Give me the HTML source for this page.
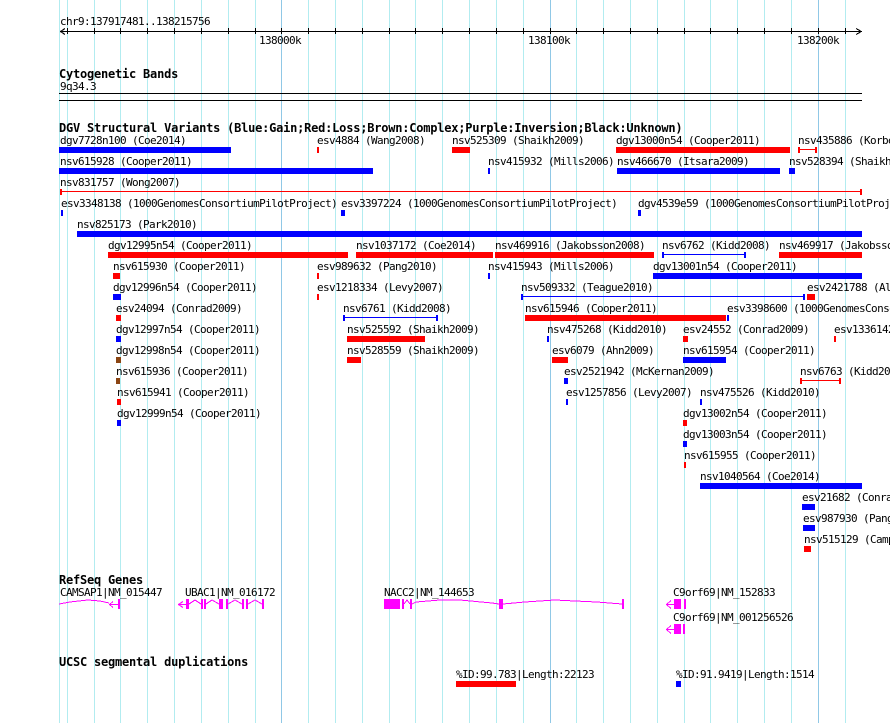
<!DOCTYPE html>
<html><head><meta charset="utf-8"><title>GBrowse</title>
<style>
html,body{margin:0;padding:0;background:#fff;width:890px;height:723px;overflow:hidden}
svg{display:block}
text{font-family:"DejaVu Sans Mono","Liberation Mono",monospace;font-size:11px;letter-spacing:-.62px;fill:#000;white-space:pre}
text.b{font-weight:bold;font-size:12px;letter-spacing:-.22px}
.g rect{fill:#b2ecf0}
.d{fill:#90c8e6 !important}
.r{fill:#f00}.u{fill:#00f}.n{fill:#8b4513}.m{fill:#f0f}.k{fill:#000}
.c{shape-rendering:crispEdges}
polyline,path{shape-rendering:crispEdges}
polyline{fill:none;stroke:#f0f;stroke-width:1}
</style></head><body>
<svg width="890" height="723" viewBox="0 0 890 723" xmlns="http://www.w3.org/2000/svg">
<g class="g c">
<rect x="59" y="0" width="1" height="723"/><rect x="67" y="0" width="1" height="723"/><rect x="94" y="0" width="1" height="723"/><rect x="120" y="0" width="1" height="723"/><rect x="147" y="0" width="1" height="723"/><rect x="174" y="0" width="1" height="723"/><rect x="201" y="0" width="1" height="723"/><rect x="228" y="0" width="1" height="723"/><rect x="255" y="0" width="1" height="723"/><rect class="d" x="281" y="0" width="1" height="723"/><rect x="308" y="0" width="1" height="723"/><rect x="335" y="0" width="1" height="723"/><rect x="362" y="0" width="1" height="723"/><rect x="389" y="0" width="1" height="723"/><rect x="415" y="0" width="1" height="723"/><rect x="442" y="0" width="1" height="723"/><rect x="469" y="0" width="1" height="723"/><rect x="496" y="0" width="1" height="723"/><rect x="523" y="0" width="1" height="723"/><rect class="d" x="550" y="0" width="1" height="723"/><rect x="576" y="0" width="1" height="723"/><rect x="603" y="0" width="1" height="723"/><rect x="630" y="0" width="1" height="723"/><rect x="657" y="0" width="1" height="723"/><rect x="684" y="0" width="1" height="723"/><rect x="710" y="0" width="1" height="723"/><rect x="737" y="0" width="1" height="723"/><rect x="764" y="0" width="1" height="723"/><rect x="791" y="0" width="1" height="723"/><rect class="d" x="818" y="0" width="1" height="723"/><rect x="845" y="0" width="1" height="723"/>
</g>

<!-- ruler -->
<g class="k c">
<rect x="60" y="31" width="802" height="1"/>
<rect x="67" y="28" width="1" height="6"/><rect x="94" y="28" width="1" height="6"/><rect x="120" y="28" width="1" height="6"/><rect x="147" y="28" width="1" height="6"/><rect x="174" y="28" width="1" height="6"/><rect x="201" y="28" width="1" height="6"/><rect x="228" y="28" width="1" height="6"/><rect x="255" y="28" width="1" height="6"/><rect x="281" y="28" width="1" height="6"/><rect x="308" y="28" width="1" height="6"/><rect x="335" y="28" width="1" height="6"/><rect x="362" y="28" width="1" height="6"/><rect x="389" y="28" width="1" height="6"/><rect x="415" y="28" width="1" height="6"/><rect x="442" y="28" width="1" height="6"/><rect x="469" y="28" width="1" height="6"/><rect x="496" y="28" width="1" height="6"/><rect x="523" y="28" width="1" height="6"/><rect x="550" y="28" width="1" height="6"/><rect x="576" y="28" width="1" height="6"/><rect x="603" y="28" width="1" height="6"/><rect x="630" y="28" width="1" height="6"/><rect x="657" y="28" width="1" height="6"/><rect x="684" y="28" width="1" height="6"/><rect x="710" y="28" width="1" height="6"/><rect x="737" y="28" width="1" height="6"/><rect x="764" y="28" width="1" height="6"/><rect x="791" y="28" width="1" height="6"/><rect x="818" y="28" width="1" height="6"/><rect x="845" y="28" width="1" height="6"/>
<rect x="59" y="93" width="803" height="1"/><rect x="59" y="100" width="803" height="1"/>
</g>
<path d="M65 28.5L60.5 31.5L65 34.5M856 28.5L861.5 31.5L856 34.5" fill="none" stroke="#000" stroke-width="1"/>

<text x="60" y="25">chr9:137917481..138215756</text>
<text x="259" y="44">138000k</text><text x="528" y="44">138100k</text><text x="797" y="44">138200k</text>
<text class="b" x="59" y="78">Cytogenetic Bands</text>
<text x="60" y="90">9q34.3</text>
<text class="b" x="59" y="132">DGV Structural Variants (Blue:Gain;Red:Loss;Brown:Complex;Purple:Inversion;Black:Unknown)</text>

<!-- features -->
<g class="c">
<g class="u">
<rect x="59" y="147" width="172" height="6"/>
<rect x="59" y="168" width="314" height="6"/><rect x="488" y="168" width="2" height="6"/><rect x="617" y="168" width="163" height="6"/><rect x="789" y="168" width="6" height="6"/>
<rect x="61" y="210" width="2" height="6"/><rect x="341" y="210" width="4" height="6"/><rect x="638" y="210" width="3" height="6"/>
<rect x="77" y="231" width="785" height="6"/>
<rect x="662" y="252" width="2" height="6"/><rect x="662" y="254" width="84" height="1"/><rect x="744" y="252" width="2" height="6"/>
<rect x="488" y="273" width="2" height="6"/><rect x="653" y="273" width="209" height="6"/>
<rect x="113" y="294" width="8" height="6"/><rect x="521" y="294" width="2" height="6"/><rect x="521" y="296" width="284" height="1"/><rect x="803" y="294" width="2" height="6"/>
<rect x="343" y="315" width="2" height="6"/><rect x="343" y="317" width="95" height="1"/><rect x="436" y="315" width="2" height="6"/><rect x="727" y="315" width="2" height="6"/>
<rect x="116" y="336" width="5" height="6"/><rect x="547" y="336" width="2" height="6"/>
<rect x="683" y="357" width="43" height="6"/>
<rect x="564" y="378" width="4" height="6"/>
<rect x="566" y="399" width="2" height="6"/><rect x="700" y="399" width="2" height="6"/>
<rect x="117" y="420" width="4" height="6"/>
<rect x="683" y="441" width="4" height="6"/>
<rect x="700" y="483" width="162" height="6"/>
<rect x="802" y="504" width="13" height="6"/>
<rect x="803" y="525" width="12" height="6"/>
<rect x="676" y="681" width="5" height="6"/>
</g>
<g class="r">
<rect x="317" y="147" width="2" height="6"/><rect x="452" y="147" width="18" height="6"/><rect x="616" y="147" width="174" height="6"/>
<rect x="798" y="147" width="2" height="6"/><rect x="798" y="149" width="19" height="1"/><rect x="815" y="147" width="2" height="6"/>
<rect x="60" y="189" width="2" height="6"/><rect x="60" y="191" width="802" height="1"/><rect x="860" y="189" width="2" height="6"/>
<rect x="108" y="252" width="240" height="6"/><rect x="356" y="252" width="137" height="6"/><rect x="495" y="252" width="159" height="6"/><rect x="779" y="252" width="83" height="6"/>
<rect x="113" y="273" width="7" height="6"/><rect x="317" y="273" width="2" height="6"/>
<rect x="317" y="294" width="2" height="6"/><rect x="807" y="294" width="8" height="6"/>
<rect x="116" y="315" width="5" height="6"/><rect x="525" y="315" width="201" height="6"/>
<rect x="347" y="336" width="78" height="6"/><rect x="683" y="336" width="5" height="6"/><rect x="834" y="336" width="2" height="6"/>
<rect x="347" y="357" width="14" height="6"/><rect x="552" y="357" width="16" height="6"/>
<rect x="800" y="378" width="2" height="6"/><rect x="800" y="380" width="41" height="1"/><rect x="839" y="378" width="2" height="6"/>
<rect x="117" y="399" width="4" height="6"/>
<rect x="683" y="420" width="4" height="6"/>
<rect x="684" y="462" width="2" height="6"/>
<rect x="804" y="546" width="7" height="6"/>
<rect x="456" y="681" width="60" height="6"/>
</g>
<g class="n"><rect x="116" y="357" width="5" height="6"/><rect x="116" y="378" width="4" height="6"/></g>
</g>

<!-- labels -->
<text x="60" y="144">dgv7728n100 (Coe2014)</text><text x="317" y="144">esv4884 (Wang2008)</text><text x="452" y="144">nsv525309 (Shaikh2009)</text><text x="616" y="144">dgv13000n54 (Cooper2011)</text><text x="798" y="144">nsv435886 (Korbel2007)</text>
<text x="60" y="165">nsv615928 (Cooper2011)</text><text x="488" y="165">nsv415932 (Mills2006)</text><text x="617" y="165">nsv466670 (Itsara2009)</text><text x="789" y="165">nsv528394 (Shaikh2009)</text>
<text x="60" y="186">nsv831757 (Wong2007)</text>
<text x="61" y="207">esv3348138 (1000GenomesConsortiumPilotProject)</text><text x="341" y="207">esv3397224 (1000GenomesConsortiumPilotProject)</text><text x="638" y="207">dgv4539e59 (1000GenomesConsortiumPilotProject)</text>
<text x="77" y="228">nsv825173 (Park2010)</text>
<text x="108" y="249">dgv12995n54 (Cooper2011)</text><text x="356" y="249">nsv1037172 (Coe2014)</text><text x="495" y="249">nsv469916 (Jakobsson2008)</text><text x="662" y="249">nsv6762 (Kidd2008)</text><text x="779" y="249">nsv469917 (Jakobsson2008)</text>
<text x="113" y="270">nsv615930 (Cooper2011)</text><text x="317" y="270">esv989632 (Pang2010)</text><text x="488" y="270">nsv415943 (Mills2006)</text><text x="653" y="270">dgv13001n54 (Cooper2011)</text>
<text x="113" y="291">dgv12996n54 (Cooper2011)</text><text x="317" y="291">esv1218334 (Levy2007)</text><text x="521" y="291">nsv509332 (Teague2010)</text><text x="807" y="291">esv2421788 (Alkan2009)</text>
<text x="116" y="312">esv24094 (Conrad2009)</text><text x="343" y="312">nsv6761 (Kidd2008)</text><text x="525" y="312">nsv615946 (Cooper2011)</text><text x="727" y="312">esv3398600 (1000GenomesConsortiumPilotProject)</text>
<text x="116" y="333">dgv12997n54 (Cooper2011)</text><text x="347" y="333">nsv525592 (Shaikh2009)</text><text x="547" y="333">nsv475268 (Kidd2010)</text><text x="683" y="333">esv24552 (Conrad2009)</text><text x="834" y="333">esv1336142 (Conrad2009)</text>
<text x="116" y="354">dgv12998n54 (Cooper2011)</text><text x="347" y="354">nsv528559 (Shaikh2009)</text><text x="552" y="354">esv6079 (Ahn2009)</text><text x="683" y="354">nsv615954 (Cooper2011)</text>
<text x="116" y="375">nsv615936 (Cooper2011)</text><text x="564" y="375">esv2521942 (McKernan2009)</text><text x="800" y="375">nsv6763 (Kidd2008)</text>
<text x="117" y="396">nsv615941 (Cooper2011)</text><text x="566" y="396">esv1257856 (Levy2007)</text><text x="700" y="396">nsv475526 (Kidd2010)</text>
<text x="117" y="417">dgv12999n54 (Cooper2011)</text><text x="683" y="417">dgv13002n54 (Cooper2011)</text>
<text x="683" y="438">dgv13003n54 (Cooper2011)</text>
<text x="684" y="459">nsv615955 (Cooper2011)</text>
<text x="700" y="480">nsv1040564 (Coe2014)</text>
<text x="802" y="501">esv21682 (Conrad2009)</text>
<text x="803" y="522">esv987930 (Pang2010)</text>
<text x="804" y="543">nsv515129 (Campbell2011)</text>

<text class="b" x="59" y="584">RefSeq Genes</text>
<text x="60" y="596">CAMSAP1|NM_015447</text><text x="185" y="596">UBAC1|NM_016172</text><text x="384" y="596">NACC2|NM_144653</text><text x="673" y="596">C9orf69|NM_152833</text>
<text x="673" y="621">C9orf69|NM_001256526</text>

<!-- genes -->
<g class="m c">
<rect x="118" y="599" width="2" height="10"/>
<rect x="186" y="599" width="3" height="10"/><rect x="201" y="599" width="2" height="10"/><rect x="204" y="599" width="2" height="10"/><rect x="219" y="599" width="4" height="10"/><rect x="226" y="599" width="2" height="10"/><rect x="242" y="599" width="2" height="10"/><rect x="246" y="599" width="2" height="10"/><rect x="262" y="599" width="2" height="10"/>
<rect x="384" y="599" width="16" height="10"/><rect x="402" y="599" width="2" height="10"/><rect x="410" y="599" width="2" height="10"/><rect x="499" y="599" width="4" height="10"/><rect x="622" y="599" width="2" height="10"/>
<rect x="674" y="599" width="7" height="10"/><rect x="684" y="599" width="2" height="10"/>
<rect x="674" y="624" width="7" height="10"/><rect x="683" y="624" width="2" height="10"/>
<rect x="110" y="604" width="8" height="1"/><rect x="179" y="604" width="7" height="1"/><rect x="667" y="604" width="7" height="1"/><rect x="667" y="629" width="7" height="1"/>
</g>
<polyline points="59,604 70,602 88,600 100,601 109,603"/>
<polyline points="113,601.5 109.5,604.5 113,607.5"/>
<polyline points="183,601.5 178.5,604.5 183,607.5"/>
<polyline points="189,604 195,600 201,604"/><polyline points="206,604 212,600 219,604"/><polyline points="228,604 235,600 242,604"/><polyline points="248,604 255,600 262,604"/>
<polyline points="404,604 407,600 410,604"/>
<polyline points="412,604 416,602 440,600 460,600 492,603 499,604"/>
<polyline points="503,604 525,602 555,600 575,601 597,602 622,604"/>
<polyline points="671,600.5 666.5,604.5 671,608.5"/>
<polyline points="671,625.5 666.5,629.5 671,633.5"/>

<text class="b" x="59" y="666">UCSC segmental duplications</text>
<text x="456" y="678">%ID:99.783|Length:22123</text><text x="676" y="678">%ID:91.9419|Length:1514</text>
</svg>
</body></html>
